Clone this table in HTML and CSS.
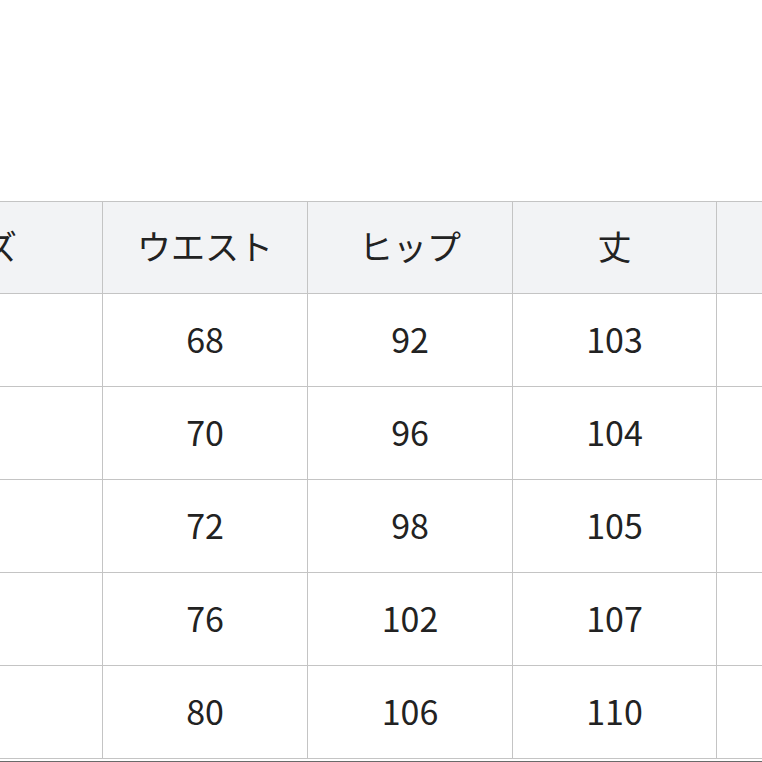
FILE: index.html
```html
<!DOCTYPE html>
<html lang="ja">
<head>
<meta charset="utf-8">
<link rel="stylesheet" href="styles.css">
</head>
<body>
<div class="page">
  <div class="size-table">
    <div class="cell head">サイズ</div>
    <div class="cell head">ウエスト</div>
    <div class="cell head">ヒップ</div>
    <div class="cell head">丈</div>
    <div class="cell head">裾幅</div>

    <div class="cell">S</div><div class="cell">68</div><div class="cell">92</div><div class="cell">103</div><div class="cell">20</div>
    <div class="cell">M</div><div class="cell">70</div><div class="cell">96</div><div class="cell">104</div><div class="cell">21</div>
    <div class="cell">L</div><div class="cell">72</div><div class="cell">98</div><div class="cell">105</div><div class="cell">22</div>
    <div class="cell">XL</div><div class="cell">76</div><div class="cell">102</div><div class="cell">107</div><div class="cell">23</div>
    <div class="cell">XXL</div><div class="cell">80</div><div class="cell">106</div><div class="cell">110</div><div class="cell">24</div>
  </div>
  <div class="bottom-rule"></div>
</div>
</body>
</html>
```

FILE: styles.css
```css
html, body {
  margin: 0;
  padding: 0;
  overflow: hidden;
  background: #ffffff;
}

.page {
  width: 762px;
  height: 762px;
  padding-top: 201px;
  box-sizing: border-box;
  font-family: "Noto Sans CJK JP", "Noto Sans", sans-serif;
  color: #222222;
}

.size-table {
  display: grid;
  grid-template-columns: 271px 204px 204px 203px 204px;
  grid-template-rows: 91px repeat(5, 92px);
  gap: 1px;
  padding: 1px;
  background: #c4c4c4;
  width: max-content;
  margin-left: -170px;
}

.cell {
  background: #ffffff;
  display: flex;
  align-items: center;
  justify-content: center;
  font-size: 34px;
  line-height: 1;
  padding-bottom: 3px;
}

.cell.head {
  background: #f2f3f5;
}

.bottom-rule {
  margin-top: 2px;
  height: 2px;
  background: #6a6a6a;
}
```
